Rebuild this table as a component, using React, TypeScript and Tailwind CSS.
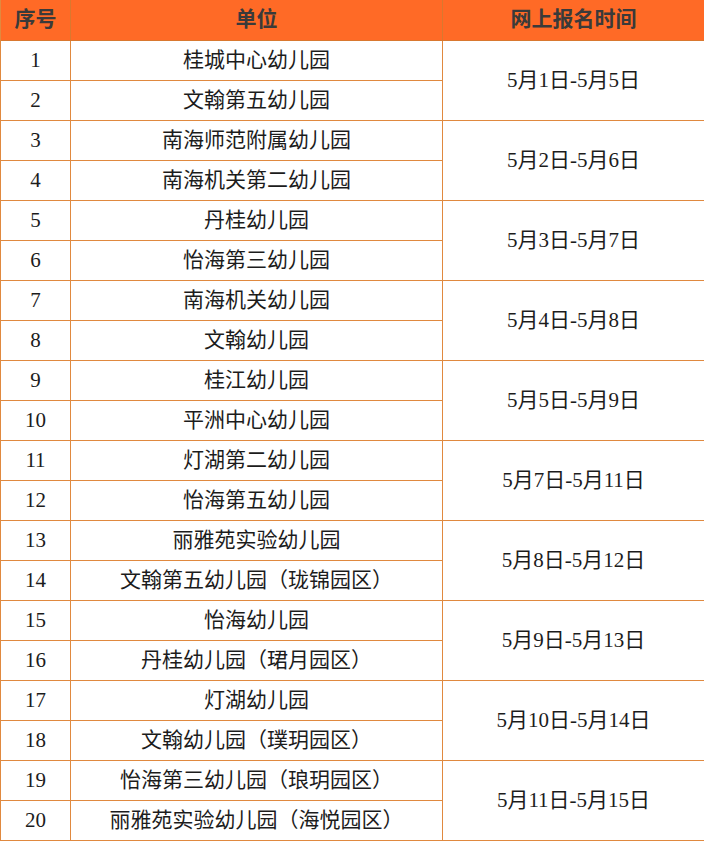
const units = [
  "桂城中心幼儿园",
  "文翰第五幼儿园",
  "南海师范附属幼儿园",
  "南海机关第二幼儿园",
  "丹桂幼儿园",
  "怡海第三幼儿园",
  "南海机关幼儿园",
  "文翰幼儿园",
  "桂江幼儿园",
  "平洲中心幼儿园",
  "灯湖第二幼儿园",
  "怡海第五幼儿园",
  "丽雅苑实验幼儿园",
  "文翰第五幼儿园（珑锦园区）",
  "怡海幼儿园",
  "丹桂幼儿园（珺月园区）",
  "灯湖幼儿园",
  "文翰幼儿园（璞玥园区）",
  "怡海第三幼儿园（琅玥园区）",
  "丽雅苑实验幼儿园（海悦园区）",
];

const dates = [
  "5月1日-5月5日",
  "5月2日-5月6日",
  "5月3日-5月7日",
  "5月4日-5月8日",
  "5月5日-5月9日",
  "5月7日-5月11日",
  "5月8日-5月12日",
  "5月9日-5月13日",
  "5月10日-5月14日",
  "5月11日-5月15日",
];

const font = { fontFamily: '"Liberation Serif", "Noto Sans CJK SC", serif' };

const cell = "border-r border-b border-[#e0893f] flex items-center justify-center";
const head = "bg-[#ff6a26] border-r border-b border-[#d9782f] flex items-center justify-center font-bold text-[#3a3a3a]";

export default function App() {
  return (
    <div className="w-[704px] bg-white text-[21px] text-[#1c1c1c]" style={font}>
      <div className="grid grid-cols-[70px_372px_262px] grid-rows-[41px_repeat(20,40px)] border-l border-[#e0893f]">
        {/* header */}
        <div className={head}>序号</div>
        <div className={head}>单位</div>
        <div className={head + " border-r-[#ff6a26]"}>网上报名时间</div>

        {units.map((u, i) => (
          <div key={i} className="contents">
            <div className={cell} style={{ gridRow: i + 2, gridColumn: 1 }}>
              {i + 1}
            </div>
            <div className={cell} style={{ gridRow: i + 2, gridColumn: 2 }}>
              {u}
            </div>
          </div>
        ))}

        {dates.map((d, j) => (
          <div
            key={d}
            className={cell}
            style={{ gridRow: `${j * 2 + 2} / span 2`, gridColumn: 3 }}
          >
            {d}
          </div>
        ))}
      </div>
    </div>
  );
}
